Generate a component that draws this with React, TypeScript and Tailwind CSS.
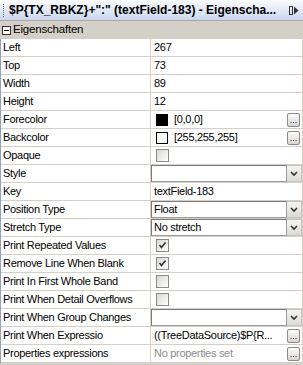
import React from "react"

type Kind = "text" | "color" | "check" | "combo" | "button" | "muted"

interface Prop {
  label: string
  kind: Kind
  value?: string
  swatch?: string
  checked?: boolean
}

const props: Prop[] = [
  { label: "Left", kind: "text", value: "267" },
  { label: "Top", kind: "text", value: "73" },
  { label: "Width", kind: "text", value: "89" },
  { label: "Height", kind: "text", value: "12" },
  { label: "Forecolor", kind: "color", value: "[0,0,0]", swatch: "#000000" },
  { label: "Backcolor", kind: "color", value: "[255,255,255]", swatch: "#ffffff" },
  { label: "Opaque", kind: "check", checked: false },
  { label: "Style", kind: "combo", value: "" },
  { label: "Key", kind: "text", value: "textField-183" },
  { label: "Position Type", kind: "combo", value: "Float" },
  { label: "Stretch Type", kind: "combo", value: "No stretch" },
  { label: "Print Repeated Values", kind: "check", checked: true },
  { label: "Remove Line When Blank", kind: "check", checked: true },
  { label: "Print In First Whole Band", kind: "check", checked: false },
  { label: "Print When Detail Overflows", kind: "check", checked: false },
  { label: "Print When Group Changes", kind: "combo", value: "" },
  { label: "Print When Expressio", kind: "button", value: "((TreeDataSource)$P{R..." },
  { label: "Properties expressions", kind: "muted", value: "No properties set" },
]

const DotsButton = () => (
  <div className="w-[13px] h-[14px] rounded-[2px] border border-[#8a8a8a] bg-gradient-to-b from-[#fbfbfb] to-[#d6d6d2] flex items-end justify-center leading-none text-[9px] text-[#222] pb-[1px] tracking-normal">
    ...
  </div>
)

const CheckBox = ({ checked }: { checked?: boolean }) => (
  <div className="w-[13px] h-[13px] border border-[#8a8a8a] bg-gradient-to-br from-[#d8d8d4] to-[#ffffff] flex items-center justify-center">
    {checked && (
      <svg width="9" height="9" viewBox="0 0 9 9">
        <path d="M1.5 4 L3.5 6.5 L7.5 1.5" fill="none" stroke="#333" strokeWidth="1.6" />
      </svg>
    )}
  </div>
)

const Combo = ({ value }: { value?: string }) => (
  <div className="flex h-full w-full">
    <div className="flex-1 border border-[#9c9c9c] border-t-[#7a7a7a] border-l-[#7a7a7a] bg-white flex items-center pl-[2px] text-black">{value}</div>
    <div className="w-[15px] border border-l-0 border-[#c4c4c4] bg-gradient-to-b from-[#f4f4f2] to-[#dcdcd6] flex items-center justify-center">
      <svg width="8" height="6" viewBox="0 0 8 6">
        <path d="M1 1 L4 4 L7 1" fill="none" stroke="#333" strokeWidth="1.6" />
      </svg>
    </div>
  </div>
)

const Value = ({ p }: { p: Prop }) => {
  switch (p.kind) {
    case "color":
      return (
        <div className="flex items-center h-full pl-[5px] pr-[2px]">
          <div className="w-[12px] h-[12px] border border-black" style={{ background: p.swatch }} />
          <span className="ml-[6px] flex-1">{p.value}</span>
          <DotsButton />
        </div>
      )
    case "check":
      return (
        <div className="flex items-center h-full pl-[5px]">
          <CheckBox checked={p.checked} />
        </div>
      )
    case "combo":
      return <Combo value={p.value} />
    case "button":
    case "muted":
      return (
        <div className="flex items-center h-full pl-[3px] pr-[2px]">
          <span className={p.kind === "muted" ? "flex-1 text-[#8c8c8c]" : "flex-1"}>{p.value}</span>
          <DotsButton />
        </div>
      )
    default:
      return <div className="flex items-center h-full pl-[3px]">{p.value}</div>
  }
}

export default function App() {
  return (
    <div className="w-[303px] h-[365px] bg-[#d4d0c8] overflow-hidden text-[11px] text-black" style={{ fontFamily: "'Liberation Sans', Arial, sans-serif" }}>
      {/* title bar */}
      <div className="h-[21px] flex items-center border-b border-[#a8a8a8] bg-gradient-to-b from-[#fbfcfe] to-[#cbd7ee]">
        <div className="ml-[3px] h-[13px] w-[2px] border-l border-dotted border-[#6a6a6a]" />
        <span className="ml-[4px] flex-1 font-bold text-[12px] whitespace-nowrap">$P{"{"}TX_RBKZ{"}"}+":" (textField-183) - Eigenscha...</span>
        <svg width="10" height="9" viewBox="0 0 10 9" className="mr-[4px]">
          <rect x="0.5" y="0.5" width="3" height="8" fill="none" stroke="#333" />
          <path d="M5 0.5 L9.5 4.5 L5 8.5 Z" fill="#333" />
        </svg>
      </div>

      {/* category */}
      <div className="h-[18px] flex items-center pl-[2px]">
        <div className="w-[9px] h-[9px] border border-[#333] bg-white flex items-center justify-center">
          <div className="w-[5px] h-[1px] bg-black" />
        </div>
        <span className="ml-[2px] text-[11.5px] tracking-[-0.2px]">Eigenschaften</span>
      </div>

      {/* rows */}
      <div className="w-[302px] bg-white border-l border-[#8ea3c4] tracking-[-0.3px]">
        {props.map((p) => (
          <div key={p.label} className="grid grid-cols-[150px_1fr] h-[18px] border-b border-[#d4d0c8]">
            <div className="border-r border-[#d4d0c8] flex items-center pl-[2px] whitespace-nowrap overflow-hidden">{p.label}</div>
            <div className="h-[17px] whitespace-nowrap overflow-hidden">
              <Value p={p} />
            </div>
          </div>
        ))}
      </div>
    </div>
  )
}
